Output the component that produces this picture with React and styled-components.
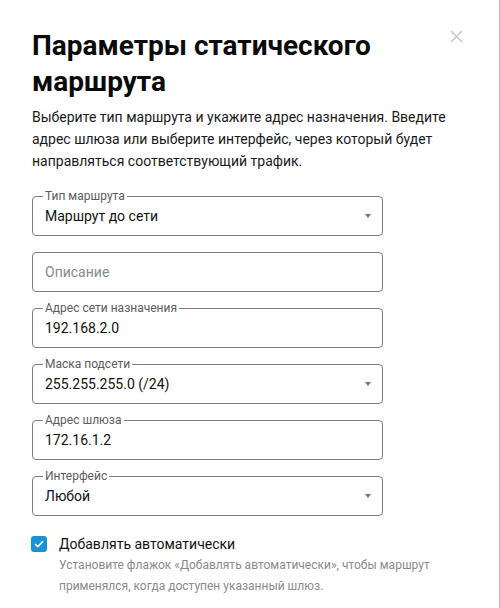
import React from 'react';
import styled, { createGlobalStyle } from 'styled-components';

const GlobalStyle = createGlobalStyle`
  html, body {
    margin: 0;
    padding: 0;
    background: #ffffff;
  }
  body {
    font-family: 'Roboto', 'Liberation Sans', sans-serif;
    color: #111;
  }
`;

const Dialog = styled.div`
  position: relative;
  box-sizing: border-box;
  width: 500px;
  height: 608px;
  padding: 28px 0 0 32px;
  border-right: 1px solid #bdbdbd;
  overflow: hidden;
`;

const CloseButton = styled.button`
  position: absolute;
  top: 29px;
  left: 449px;
  width: 14px;
  height: 14px;
  padding: 0;
  border: 0;
  background: none;
  cursor: pointer;
  display: flex;
  align-items: center;
  justify-content: center;
`;

const Title = styled.h1`
  margin: 0;
  width: 400px;
  font-size: 28px;
  line-height: 36px;
  font-weight: 700;
  color: #0a0a0a;
`;

const Description = styled.p`
  margin: 6px 0 0;
  width: 436px;
  font-size: 14px;
  line-height: 22px;
  color: #1a1a1a;
`;

const Form = styled.div`
  display: flex;
  flex-direction: column;
  gap: 16px;
  margin-top: 24px;
  width: 351px;
`;

const Field = styled.div`
  position: relative;
  box-sizing: border-box;
  height: 40px;
  border: 1px solid #7c7c7c;
  border-radius: 4px;
  display: flex;
  align-items: center;
  padding: 0 12px;
  cursor: ${p => (p.$select ? 'pointer' : 'text')};
`;

const FloatLabel = styled.span`
  position: absolute;
  top: -8px;
  left: 10px;
  padding: 0 2px;
  background: #fff;
  font-size: 12px;
  line-height: 14px;
  color: #5c5c5c;
`;

const Value = styled.span`
  flex: 1;
  font-size: 14px;
  color: ${p => (p.$placeholder ? '#8a8a8a' : '#111')};
`;

const Caret = styled.span`
  width: 0;
  height: 0;
  margin-right: -1px;
  border-left: 3.5px solid transparent;
  border-right: 3.5px solid transparent;
  border-top: 4px solid #777;
`;

const CheckRow = styled.div`
  display: flex;
  gap: 12px;
  margin-top: 20px;
  width: 440px;
  margin-left: -1px;
`;

const CheckBox = styled.span`
  flex: none;
  width: 16px;
  height: 16px;
  border-radius: 3px;
  background: #1c92d6;
  display: flex;
  align-items: center;
  justify-content: center;
`;

const CheckText = styled.div`
  display: flex;
  flex-direction: column;
`;

const CheckLabel = styled.span`
  font-size: 14px;
  line-height: 17px;
  color: #111;
`;

const Hint = styled.span`
  margin-top: 2px;
  font-size: 12px;
  line-height: 21px;
  color: #8a8a8a;
`;

function TextField({ label, value, placeholder, select }) {
  return (
    <Field $select={select}>
      {label && <FloatLabel>{label}</FloatLabel>}
      <Value $placeholder={!value}>{value || placeholder}</Value>
      {select && <Caret />}
    </Field>
  );
}

export default function App() {
  return (
    <>
      <GlobalStyle />
      <Dialog>
        <CloseButton aria-label="Закрыть">
          <svg width="13" height="13" viewBox="0 0 13 13">
            <path d="M1 1 L12 12 M12 1 L1 12" stroke="#c8c8c8" strokeWidth="1.6" />
          </svg>
        </CloseButton>
        <Title>Параметры статического маршрута</Title>
        <Description>
          Выберите тип маршрута и укажите адрес назначения. Введите адрес шлюза или
          выберите интерфейс, через который будет направляться соответствующий трафик.
        </Description>
        <Form>
          <TextField label="Тип маршрута" value="Маршрут до сети" select />
          <TextField placeholder="Описание" />
          <TextField label="Адрес сети назначения" value="192.168.2.0" />
          <TextField label="Маска подсети" value="255.255.255.0 (/24)" select />
          <TextField label="Адрес шлюза" value="172.16.1.2" />
          <TextField label="Интерфейс" value="Любой" select />
        </Form>
        <CheckRow>
          <CheckBox>
            <svg width="10" height="8" viewBox="0 0 10 8">
              <path d="M1 4 L3.8 6.6 L9 1.2" fill="none" stroke="#fff" strokeWidth="1.6" />
            </svg>
          </CheckBox>
          <CheckText>
            <CheckLabel>Добавлять автоматически</CheckLabel>
            <Hint>
              Установите флажок «Добавлять автоматически», чтобы маршрут применялся,
              когда доступен указанный шлюз.
            </Hint>
          </CheckText>
        </CheckRow>
      </Dialog>
    </>
  );
}
